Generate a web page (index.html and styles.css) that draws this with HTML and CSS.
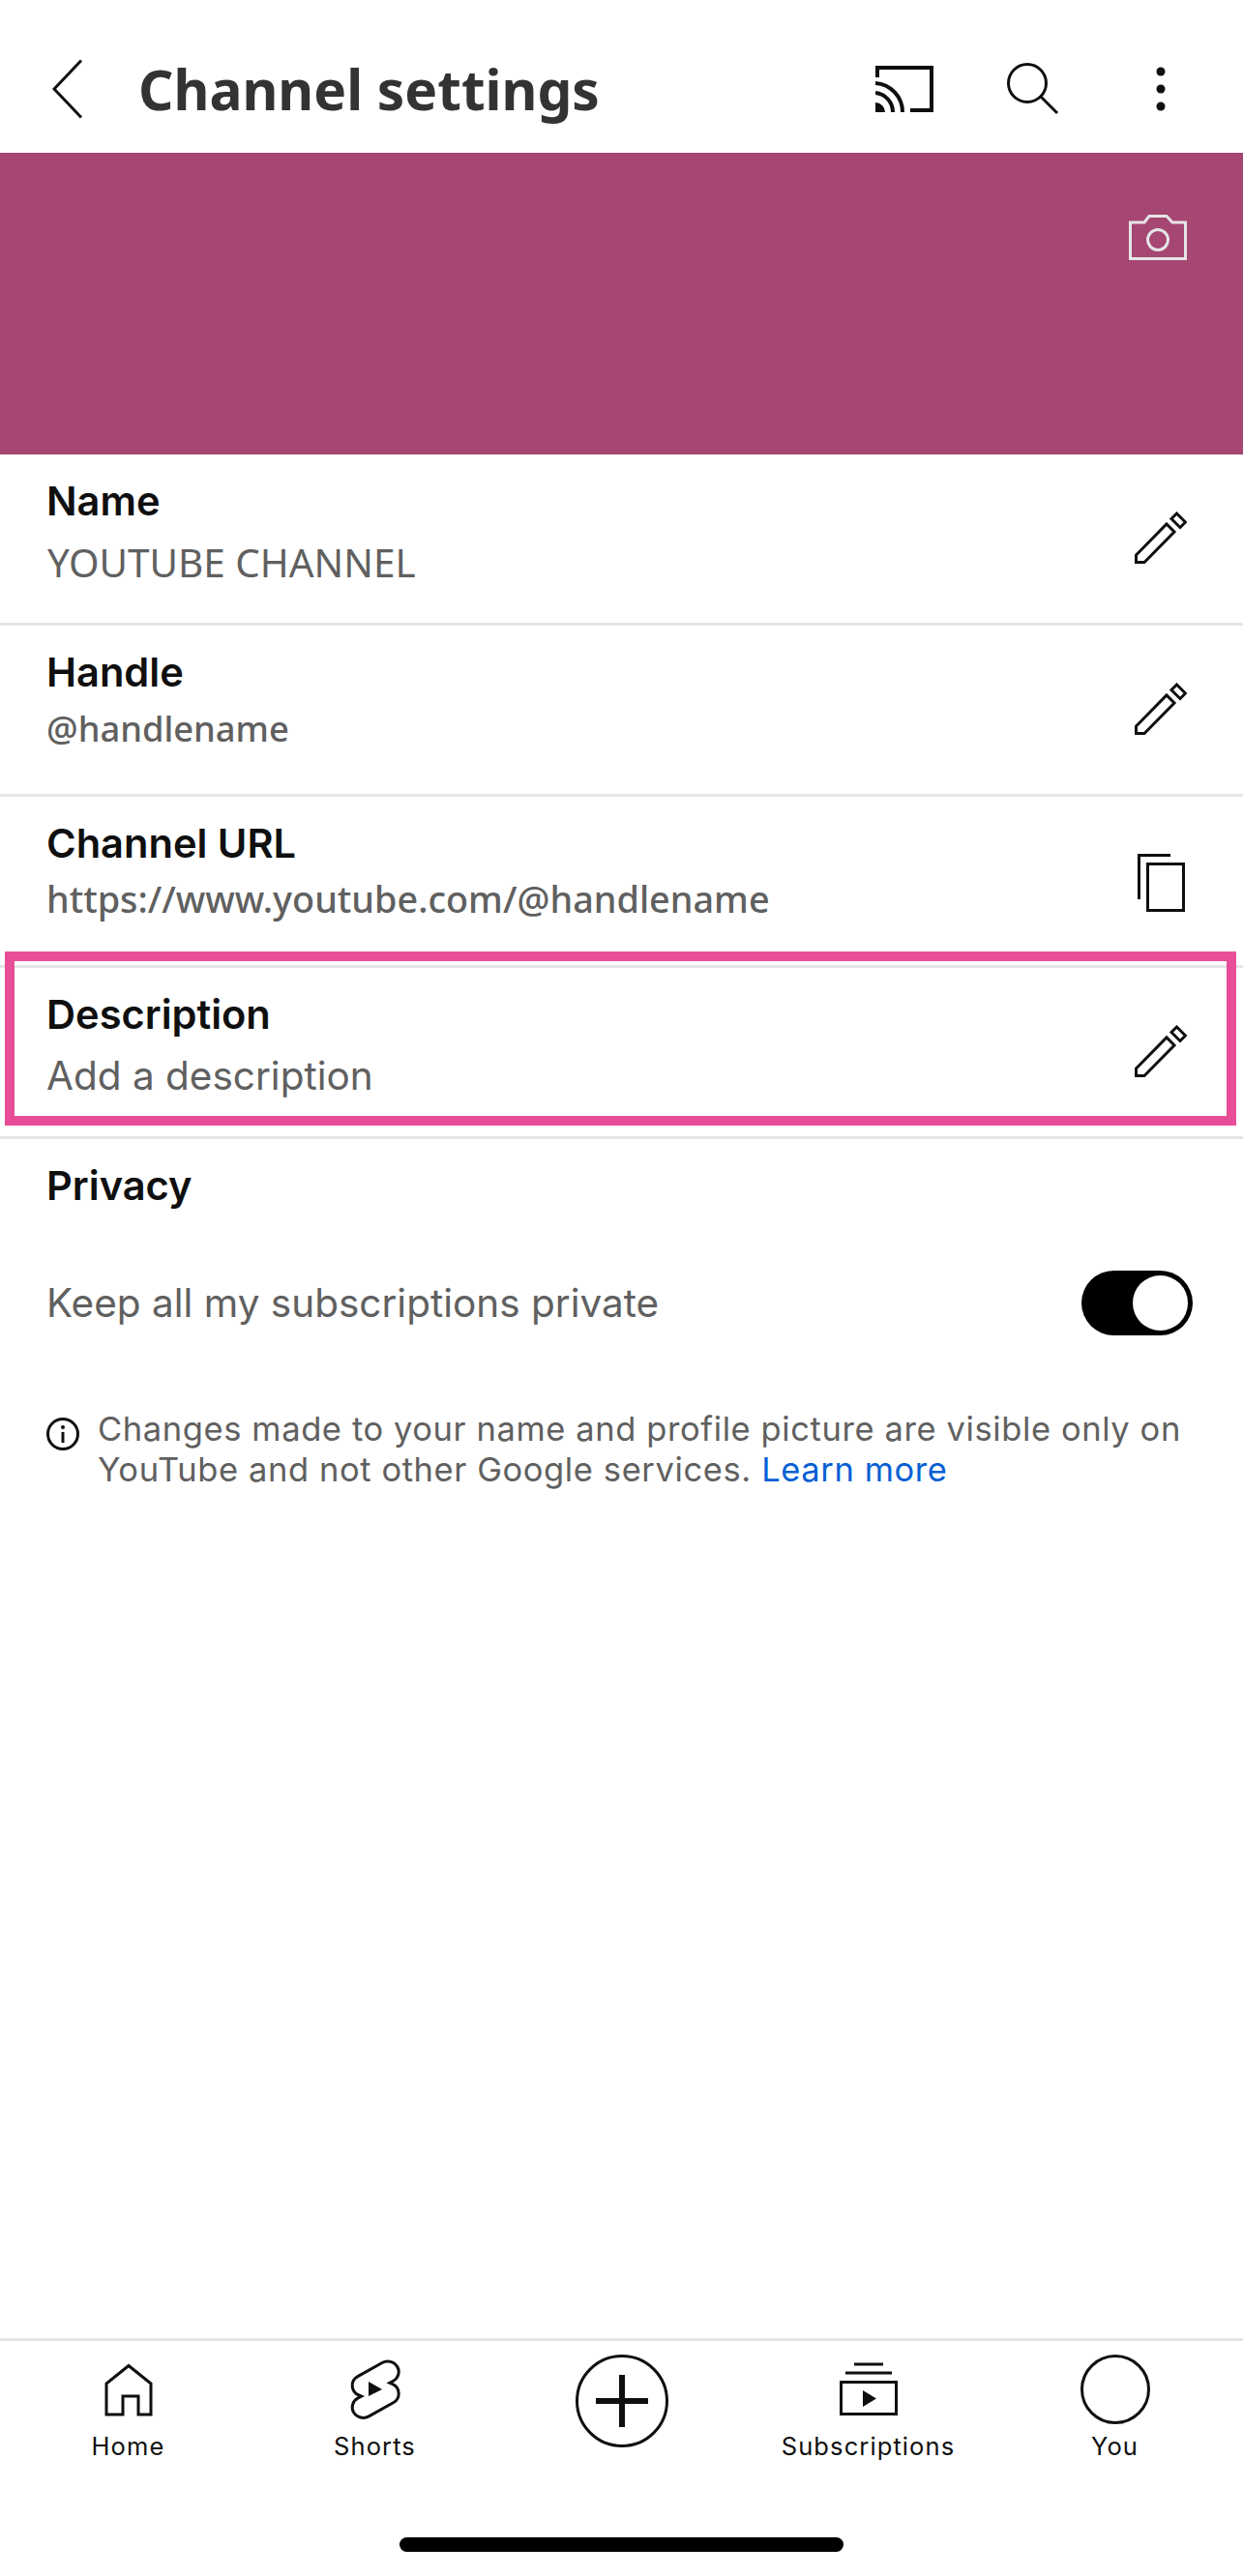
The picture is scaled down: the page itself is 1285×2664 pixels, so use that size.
FILE: index.html
```html
<!DOCTYPE html>
<html lang="en">
<head>
  <meta charset="UTF-8">
  <meta name="viewport" content="width=device-width, initial-scale=1.0">
  <title>Channel settings</title>
  <link rel="stylesheet" href="styles.css">
</head>
<body>
  <header class="topbar">
    <svg class="back" width="32" height="62" viewBox="0 0 32 62"><path d="M30 1.5 L2 31 L30 60.5" /></svg>
    <h1>Channel settings</h1>
    <svg class="cast" width="60" height="48" viewBox="0 0 60 48">
      <path class="thick" d="M2 12 V2 H58 V46 H36" />
      <path class="thick" d="M0 18 A30 30 0 0 1 28 48 M0 28 A20 20 0 0 1 18 48" />
      <path class="solid" d="M0 38 A10 10 0 0 1 10 48 H0 Z" />
    </svg>
    <svg class="search" width="54" height="54" viewBox="0 0 54 54"><circle cx="21" cy="21" r="19.5" /><path d="M35 35 L52 52" /></svg>
    <svg class="dots" width="10" height="46" viewBox="0 0 10 46"><circle class="solid" cx="5" cy="5" r="4.5" /><circle class="solid" cx="5" cy="23" r="4.5" /><circle class="solid" cx="5" cy="41" r="4.5" /></svg>
  </header>

  <div class="banner">
    <svg class="camera" width="60" height="47" viewBox="0 0 60 47"><path d="M1.5 45.5 V8 H16 L21 1.5 H39 L45 8 H58.5 V45.5 Z" /><circle cx="30" cy="26" r="10.5" /></svg>
  </div>

  <div class="row">
    <div>
      <div class="label">Name</div>
      <div class="value noto-big">YOUTUBE CHANNEL</div>
    </div>
    <svg class="pencil" width="54" height="54" viewBox="0 0 54 54"><path d="M1.5 45 L33 13 L41 21 L10 52.5 H1.5 Z" /><path d="M43.5 2 L52.5 11 L47 16.5 L38 7.5 Z" /></svg>
  </div>
  <div class="row">
    <div>
      <div class="label">Handle</div>
      <div class="value noto">@handlename</div>
    </div>
    <svg class="pencil" width="54" height="54" viewBox="0 0 54 54"><path d="M1.5 45 L33 13 L41 21 L10 52.5 H1.5 Z" /><path d="M43.5 2 L52.5 11 L47 16.5 L38 7.5 Z" /></svg>
  </div>
  <div class="row">
    <div>
      <div class="label">Channel URL</div>
      <div class="value noto noto-url">https://www.youtube.com/@handlename</div>
    </div>
    <svg class="copy" width="54" height="60" viewBox="0 0 54 60"><path d="M4.5 47 V1.5 H37" /><rect x="13.5" y="10.5" width="37" height="48" /></svg>
  </div>
  <div class="row row-marked">
    <div>
      <div class="label">Description</div>
      <div class="value">Add a description</div>
    </div>
    <svg class="pencil" width="54" height="54" viewBox="0 0 54 54"><path d="M1.5 45 L33 13 L41 21 L10 52.5 H1.5 Z" /><path d="M43.5 2 L52.5 11 L47 16.5 L38 7.5 Z" /></svg>
    <div class="marker"></div>
  </div>

  <section class="privacy">
    <div class="label">Privacy</div>
    <div class="setting">
      <span class="value">Keep all my subscriptions private</span>
      <div class="toggle"><div class="knob"></div></div>
    </div>
    <div class="note">
      <svg class="info" width="34" height="34" viewBox="0 0 34 34"><circle cx="17" cy="17" r="15.5" /><path d="M17 15 V26" /><circle class="solid" cx="17" cy="10" r="2" /></svg>
      <p>Changes made to your name and profile picture are visible only on YouTube and not other Google services. <a href="#">Learn more</a></p>
    </div>
  </section>

  <nav class="tabs">
    <div class="tab">
      <svg width="72" height="72" viewBox="0 0 72 72"><path d="M36 11.5 L13 30 V62 H30 V43 H46 V62 H59 V30 Z" /></svg>
      <span>Home</span>
    </div>
    <div class="tab">
      <svg width="72" height="72" viewBox="0 0 72 72">
        <g transform="translate(2 2) scale(2.85)"><path class="shorts" d="M18.45 8.85c1.9-1.07 2.54-3.4 1.42-5.21-1.12-1.81-3.57-2.42-5.47-1.36L5.55 7.25c-1.29.72-2.05 2.07-1.97 3.49.08 1.42.99 2.68 2.35 3.27l.94.4-1.33.74c-1.9 1.07-2.54 3.4-1.42 5.21 1.12 1.81 3.57 2.42 5.47 1.36l8.85-4.97c1.29-.72 2.05-2.07 1.97-3.49-.08-1.42-.99-2.68-2.35-3.27l-.94-.4 1.33-.74z" /></g>
        <path class="solid" d="M29 28 L43 36 L29 43 Z" />
      </svg>
      <span>Shorts</span>
    </div>
    <div class="tab">
      <svg class="plus" width="96" height="96" viewBox="0 0 96 96"><circle cx="48" cy="48" r="46.5" /><path class="plus-bar" d="M48 21 V75 M21 48 H75" /></svg>
    </div>
    <div class="tab">
      <svg width="72" height="72" viewBox="0 0 72 72"><rect x="7.5" y="28.5" width="57" height="33" /><path d="M12 19 H60 M21 10 H51" /><path class="solid" d="M30 37 L44 45.500 L30 54 Z" /></svg>
      <span>Subscriptions</span>
    </div>
    <div class="tab">
      <svg width="72" height="72" viewBox="0 0 72 72"><circle cx="36" cy="36" r="34.500" /></svg>
      <span>You</span>
    </div>
    <div class="home-bar"></div>
  </nav>
</body>
</html>
```

FILE: styles.css
```css
* {
  box-sizing: border-box;
}
body {
  font-family: Inter, "Liberation Sans", sans-serif;
  margin: 0;
  height: 2664px;
  display: flex;
  flex-direction: column;
  background-color: #fff;
  color: #0f0f0f;
}
svg {
  display: block;
  flex: none;
  fill: none;
  stroke: #0f0f0f;
  stroke-width: 3;
}
svg .solid {
  fill: #0f0f0f;
  stroke: none;
}
svg .thick {
  stroke-width: 4;
}
.topbar {
  height: 158px;
  padding: 26px 0 0 54px;
  display: flex;
  align-items: center;
}
.topbar h1 {
  font-family: "Noto Sans", sans-serif;
  font-size: 56.800px;
  font-weight: 700;
  color: #333;
  margin: 0 0 0 57px;
  flex: 1;
}
.search {
  margin: 0 0 0 76px;
}
.dots {
  margin: 0 80px 0 100px;
}
.banner {
  height: 312px;
  background-color: #a64672;
  padding: 64px 58px 0 0;
  display: flex;
  justify-content: flex-end;
  align-items: flex-start;
}
.camera {
  stroke: #e5e5e5;
}
.row {
  position: relative;
  height: 177px;
  padding: 24px 58px 0 48px;
  border-bottom: 3px solid #e5e5e5;
  display: flex;
  justify-content: space-between;
}
.row .pencil,
.row .copy {
  margin-top: 35px;
}
.label {
  font-size: 41.600px;
  font-weight: 600;
  line-height: 48px;
}
.value {
  font-size: 40.500px;
  line-height: 64px;
  color: #606060;
  margin-top: 8px;
}
.noto-big {
  font-family: "Noto Sans", sans-serif;
  font-size: 40.400px;
  margin-left: 1px;
}
.noto {
  font-family: "Noto Sans", sans-serif;
  font-size: 36.300px;
  font-weight: 500;
  line-height: 52px;
}
.noto-url {
  font-size: 37.800px;
}
.marker {
  position: absolute;
  top: -17px;
  left: 5px;
  right: 7px;
  height: 180px;
  border: 10px solid #e84d97;
}
.privacy {
  padding: 24px 52px 0 48px;
  flex: 1;
}
.setting {
  margin-top: 64px;
  display: flex;
  justify-content: space-between;
  align-items: center;
}
.setting .value {
  margin: 0;
}
.toggle {
  width: 115px;
  height: 67px;
  border-radius: 34px;
  background-color: #000;
  padding: 5px;
  display: flex;
  justify-content: flex-end;
}
.knob {
  width: 57px;
  height: 57px;
  border-radius: 50%;
  background-color: #fff;
}
.note {
  margin-top: 76px;
  display: flex;
  gap: 19px;
}
.info {
  margin-top: 9px;
}
.note p {
  margin: 0;
  font-size: 34.500px;
  letter-spacing: 0.6px;
  line-height: 42px;
  color: #606060;
}
.note a {
  color: #065fd4;
  text-decoration: none;
}
.tabs {
  position: relative;
  height: 246px;
  padding: 14px 5px 0;
  border-top: 3px solid #e5e5e5;
  display: grid;
  grid-template-columns: repeat(5, 1fr);
  align-items: start;
}
.tab {
  display: flex;
  flex-direction: column;
  align-items: center;
}
.tab span {
  font-size: 25.500px;
  letter-spacing: 1.1px;
  line-height: 30px;
  margin-top: 8px;
}
.plus .plus-bar {
  stroke-width: 6;
}
.shorts {
  stroke-width: 1.05;
}
.home-bar {
  position: absolute;
  left: 413px;
  bottom: 25px;
  width: 459px;
  height: 15px;
  border-radius: 8px;
  background-color: #000;
}
```
